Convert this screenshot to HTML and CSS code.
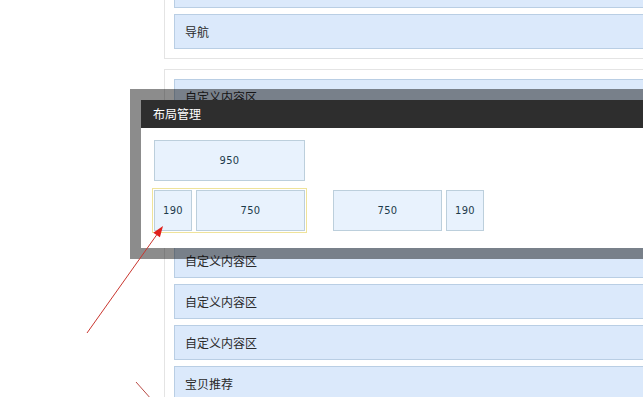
FILE: index.html
```html
<!DOCTYPE html>
<html lang="zh">
<head>
<meta charset="utf-8">
<title>布局管理</title>
<link rel="stylesheet" href="styles.css">
</head>
<body>
<div class="page">
  <div class="panel panel-top">
    <div class="bar"></div>
    <div class="bar">导航</div>
  </div>
  <div class="panel panel-main">
    <div class="bar">自定义内容区</div>
    <div class="bar">自定义内容区</div>
    <div class="bar">自定义内容区</div>
    <div class="bar">自定义内容区</div>
    <div class="bar">自定义内容区</div>
    <div class="bar">自定义内容区</div>
    <div class="bar">自定义内容区</div>
    <div class="bar">宝贝推荐</div>
  </div>
</div>

<div class="modal">
  <div class="modal-title">布局管理</div>
  <div class="modal-body">
    <div class="row">
      <div class="group"><div class="box w950">950</div></div>
    </div>
    <div class="row">
      <div class="group selected">
        <div class="box w190">190</div>
        <div class="box w750">750</div>
      </div>
      <div class="group">
        <div class="box w750">750</div>
        <div class="box w190">190</div>
      </div>
    </div>
  </div>
</div>

<svg class="arrows" width="643" height="397" viewBox="0 0 643 397">
  <line x1="87" y1="333" x2="156.6" y2="235" stroke="#c9362f" stroke-width="1"/>
  <polygon points="163,226 159.9,237.3 153.3,232.7" fill="#e0201c"/>
  <line x1="136" y1="382" x2="152" y2="400" stroke="#b84a44" stroke-width="1"/>
</svg>
</body>
</html>
```
FILE: styles.css
```css
html, body {
  margin: 0;
  padding: 0;
  width: 643px;
  height: 397px;
  overflow: hidden;
  background: #ffffff;
  font-family: "Noto Sans CJK SC", "Noto Sans", sans-serif;
}

.page {
  padding-left: 164px;
  width: 700px;
}

.panel {
  border: 1px solid #e4e4e4;
  background: #ffffff;
  padding: 9px 9px 3px 9px;
}

.panel-top {
  margin-top: -37px;
}

.panel-main {
  margin-top: 10px;
}

.bar {
  height: 33px;
  line-height: 33px;
  border: 1px solid #b9cee4;
  background: #dbe9fb;
  color: #2a2a2a;
  font-size: 12px;
  padding-left: 10px;
  margin-bottom: 6px;
}

.modal {
  position: absolute;
  left: 130px;
  top: 89px;
  width: 700px;
  border: 11px solid rgba(0, 0, 0, 0.45);
  background-clip: padding-box;
}

.modal-title {
  height: 28px;
  line-height: 27px;
  background: #2e2e2e;
  color: #ffffff;
  font-size: 12px;
  padding-left: 12px;
}

.modal-body {
  background: #ffffff;
  height: 110px;
  padding: 10px 11px 0 11px;
  display: flex;
  flex-direction: column;
  gap: 5px;
}

.row {
  display: flex;
  gap: 24px;
}

.group {
  display: flex;
  gap: 4px;
  border: 1px solid transparent;
  padding: 1px;
}

.group.selected {
  border-color: #efe39a;
}

.box {
  box-sizing: border-box;
  height: 41px;
  line-height: 39px;
  text-align: center;
  border: 1px solid #bccfdc;
  background: #e8f2fd;
  color: #1d3b4b;
  font-family: "DejaVu Sans Condensed", "DejaVu Sans", Verdana, sans-serif;
  font-stretch: condensed;
  font-size: 11px;
  letter-spacing: 0.3px;
}

.w950 { width: 151px; }
.w750 { width: 109px; }
.w190 { width: 38px; }

.arrows {
  position: absolute;
  left: 0;
  top: 0;
  pointer-events: none;
}
```
